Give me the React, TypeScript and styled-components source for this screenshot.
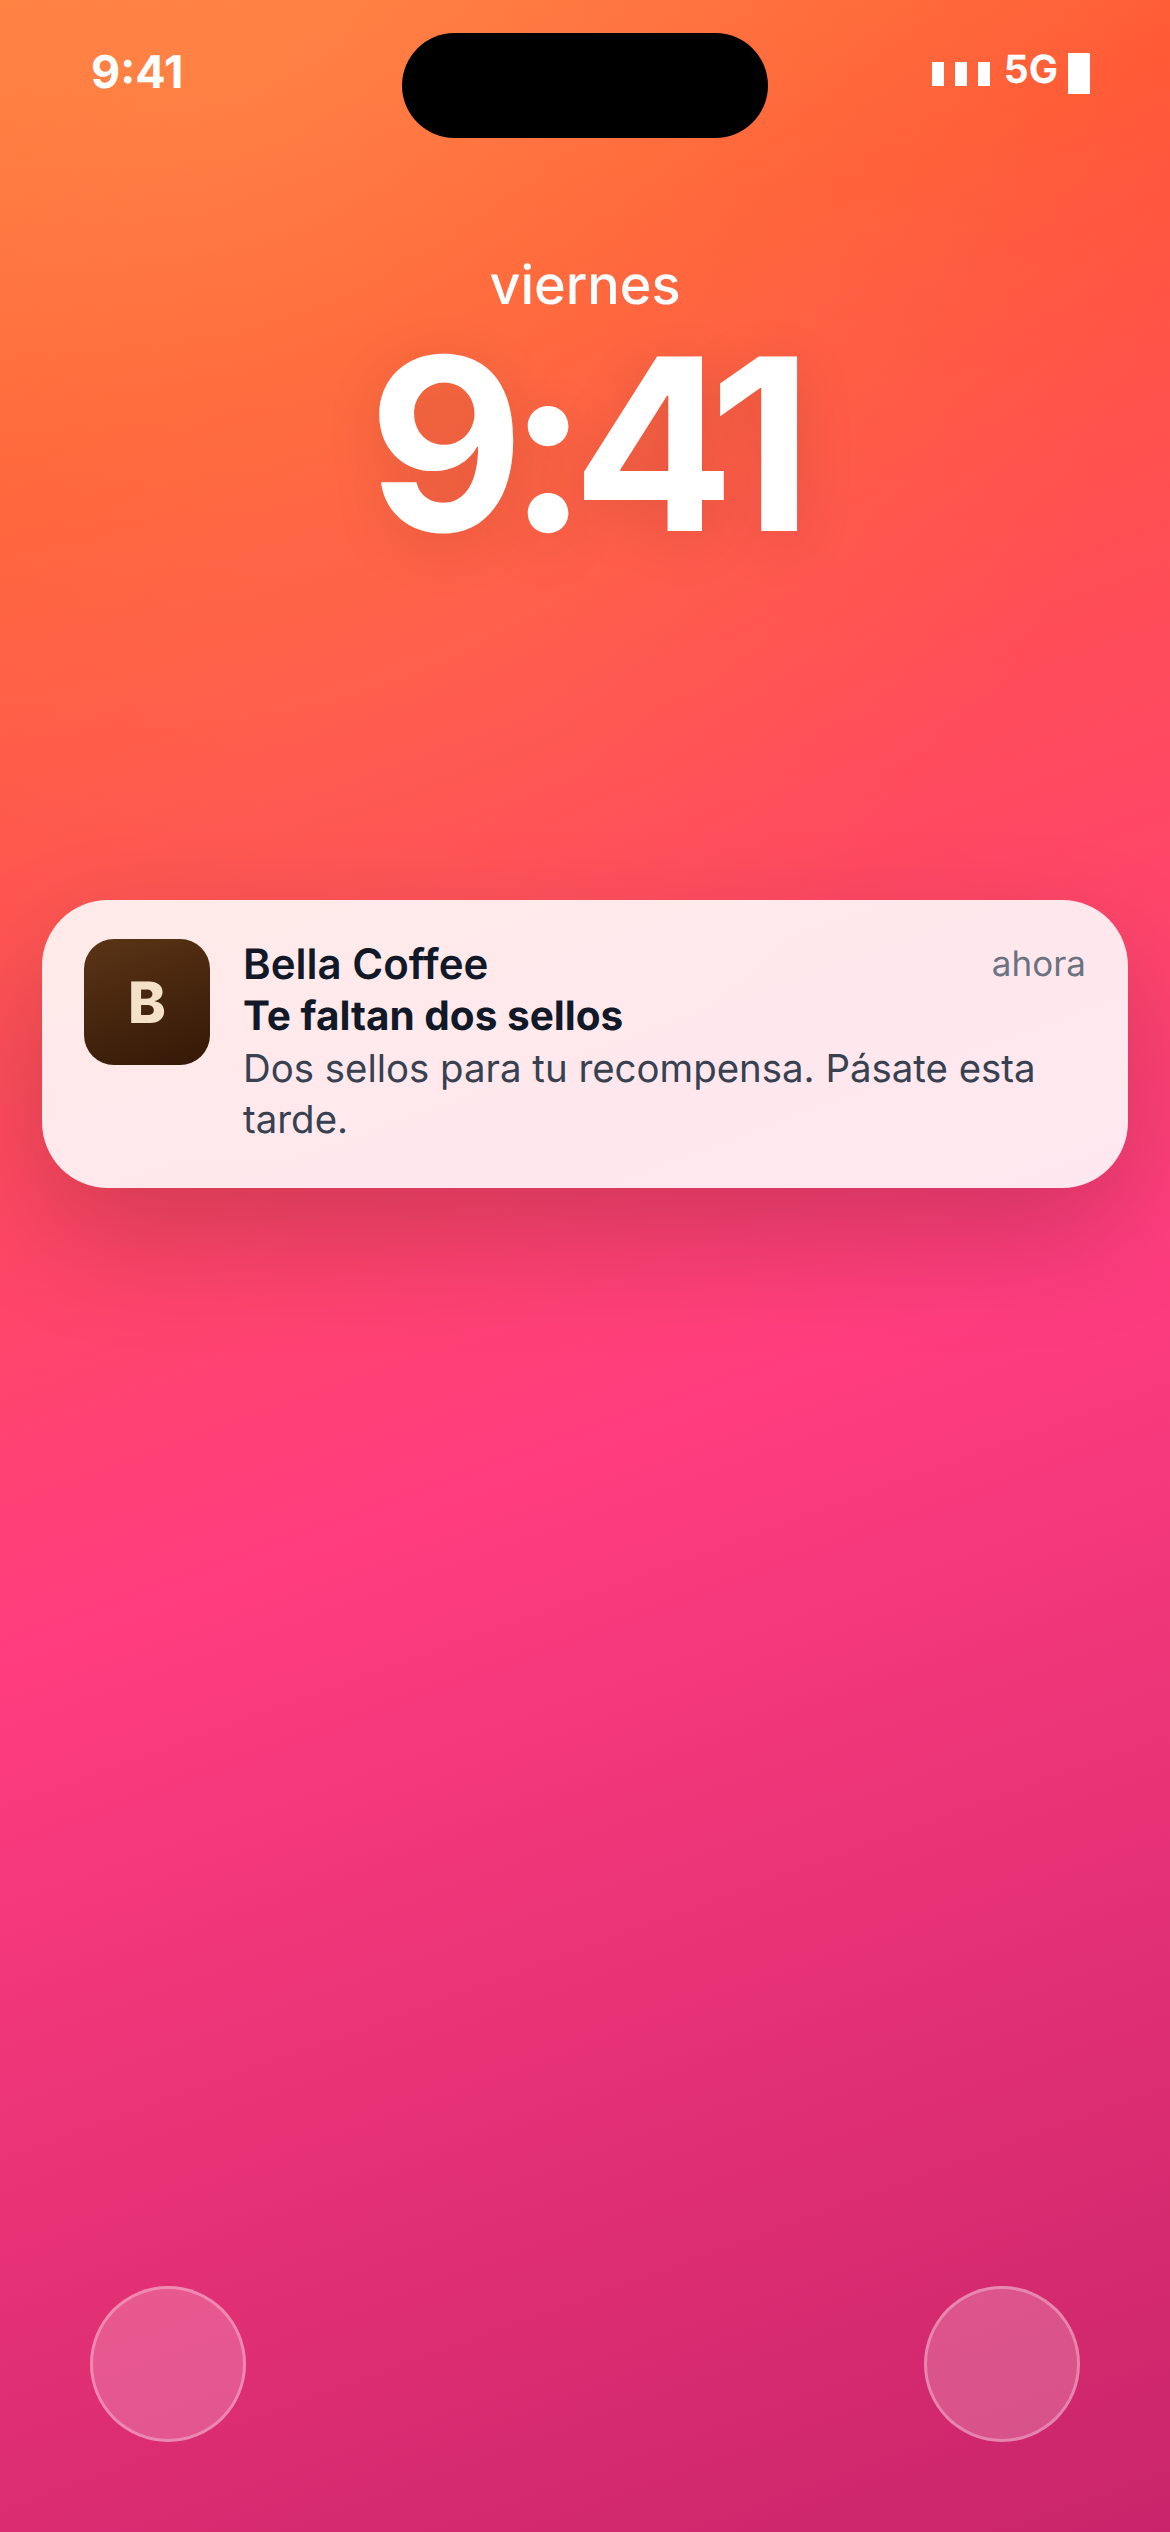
import React from "react";
import styled, { createGlobalStyle } from "styled-components";

const Global = createGlobalStyle`
  html, body { margin: 0; padding: 0; }
  body {
    font-family: Inter, "Noto Sans", sans-serif;
    text-rendering: geometricPrecision;
    -webkit-font-smoothing: antialiased;
  }
`;

const Screen = styled.div`
  position: relative;
  width: 1170px;
  height: 2532px;
  overflow: hidden;
  display: flex;
  flex-direction: column;
  color: #fff;
  background:
    radial-gradient(ellipse 950px 1150px at 234px 30px, rgba(255, 150, 80, 0.45), rgba(255, 150, 80, 0) 100%),
    linear-gradient(160deg, #ff7a3d 0%, #ff5a36 16%, #ff3d7f 56%, #c9246b 100%);
`;

const Island = styled.div`
  position: absolute;
  top: 33px;
  left: 402px;
  width: 366px;
  height: 105px;
  border-radius: 54px;
  background: #000;
`;

const StatusBar = styled.div`
  display: flex;
  justify-content: space-between;
  align-items: flex-start;
  height: 72px;
  margin-top: 36px;
  padding: 0 80px 0 91px;
  font-size: 45px;
  font-weight: 700;
  line-height: 72px;
`;

const StatusRight = styled.div`
  display: flex;
  align-items: flex-start;
  padding-top: 17px;
  font-size: 39px;
  line-height: 33px;
`;

const SignalBars = styled.div`
  display: flex;
  gap: 11px;
  margin-top: 9px;
  margin-right: 14px;
`;

const SignalBar = styled.i`
  display: block;
  width: 12px;
  height: 24px;
  background: #fff;
`;

const Battery = styled.i`
  display: block;
  width: 22px;
  height: 41px;
  margin-left: 10px;
  background: #fff;
`;

const DayLabel = styled.div`
  margin-top: 145px;
  text-align: center;
  font-size: 54px;
  font-weight: 500;
  line-height: 66px;
`;

const Clock = styled.div`
  padding-right: 5px;
  text-align: center;
  font-size: 240px;
  font-weight: 650;
  line-height: 250px;
  letter-spacing: -16px;
  text-shadow: 0 12px 60px rgba(0, 0, 0, 0.12);
`;

const Notification = styled.div`
  display: flex;
  gap: 33px;
  margin: 331px 42px 0;
  padding: 39px 42px;
  height: 288px;
  box-sizing: border-box;
  border-radius: 66px;
  background: rgba(255, 255, 255, 0.88);
  box-shadow: 0 48px 120px rgba(0, 0, 0, 0.18);
`;

const AppIcon = styled.div`
  flex: none;
  width: 126px;
  height: 126px;
  border-radius: 30px;
  display: flex;
  align-items: center;
  justify-content: center;
  background: linear-gradient(160deg, #5a3416, #341806);
  color: #f3e2c7;
  font-size: 57px;
  font-weight: 800;
`;

const NotificationBody = styled.div`
  flex: 1;
  min-width: 0;
`;

const HeaderRow = styled.div`
  display: flex;
  justify-content: space-between;
  align-items: flex-start;
`;

const AppName = styled.span`
  font-size: 42px;
  line-height: 51px;
  font-weight: 600;
  color: #111827;
`;

const TimeAgo = styled.span`
  font-size: 35px;
  line-height: 51px;
  color: #6b7280;
`;

const Title = styled.div`
  font-size: 40.5px;
  line-height: 51px;
  font-weight: 700;
  color: #111827;
`;

const Message = styled.div`
  margin-top: 3px;
  font-size: 38.4px;
  line-height: 51px;
  color: #374151;
`;

const QuickActions = styled.div`
  margin-top: auto;
  display: flex;
  justify-content: space-between;
  padding: 0 90px 90px;
`;

const RoundButton = styled.div`
  width: 156px;
  height: 156px;
  box-sizing: border-box;
  border-radius: 50%;
  border: 3px solid rgba(255, 255, 255, 0.3);
  background: rgba(255, 255, 255, 0.2);
`;

export default function App() {
  return (
    <Screen>
      <Global />
      <Island />
      <StatusBar>
        <span>9:41</span>
        <StatusRight>
          <SignalBars>
            <SignalBar />
            <SignalBar />
            <SignalBar />
          </SignalBars>
          <span>5G</span>
          <Battery />
        </StatusRight>
      </StatusBar>
      <DayLabel>viernes</DayLabel>
      <Clock>9:41</Clock>
      <Notification>
        <AppIcon>B</AppIcon>
        <NotificationBody>
          <HeaderRow>
            <AppName>Bella Coffee</AppName>
            <TimeAgo>ahora</TimeAgo>
          </HeaderRow>
          <Title>Te faltan dos sellos</Title>
          <Message>Dos sellos para tu recompensa. Pásate esta tarde.</Message>
        </NotificationBody>
      </Notification>
      <QuickActions>
        <RoundButton />
        <RoundButton />
      </QuickActions>
    </Screen>
  );
}
